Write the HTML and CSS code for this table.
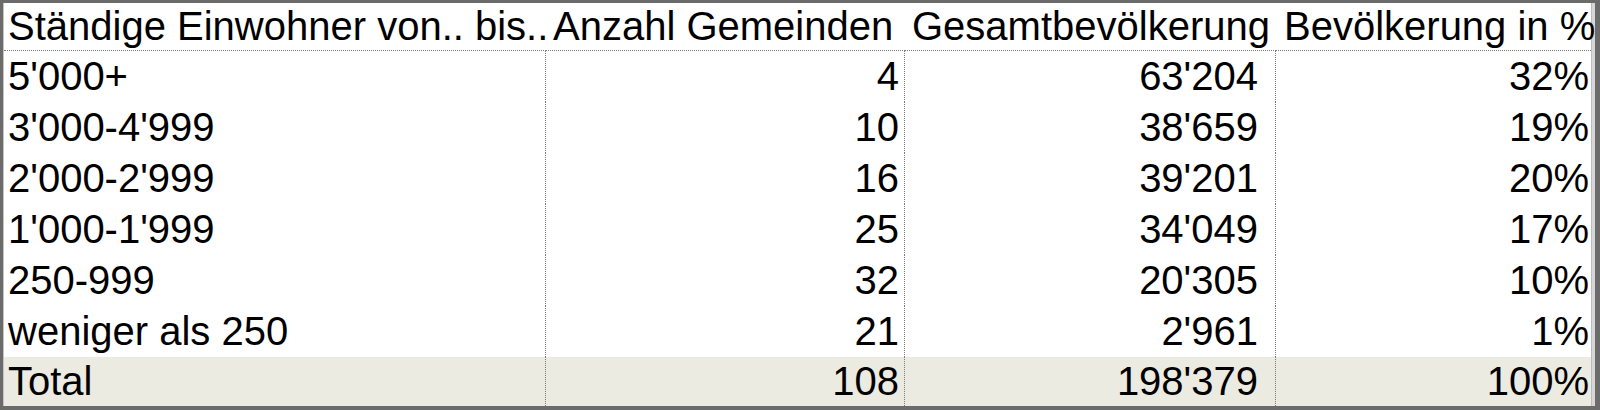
FILE: index.html
```html
<!DOCTYPE html>
<html lang="de">
<head>
<meta charset="utf-8">
<title>Ständige Einwohner</title>
<link rel="stylesheet" href="styles.css">
</head>
<body>
<div class="frame">
  <div class="inner">
    <div class="table">
      <div class="cell head first">Ständige Einwohner von.. bis..</div>
      <div class="cell head">Anzahl Gemeinden</div>
      <div class="cell head">Gesamtbevölkerung</div>
      <div class="cell head last">Bevölkerung in %</div>

      <div class="cell lbl">5'000+</div><div class="cell num c2">4</div><div class="cell num c3">63'204</div><div class="cell num c4">32%</div>
      <div class="cell lbl">3'000-4'999</div><div class="cell num c2">10</div><div class="cell num c3">38'659</div><div class="cell num c4">19%</div>
      <div class="cell lbl">2'000-2'999</div><div class="cell num c2">16</div><div class="cell num c3">39'201</div><div class="cell num c4">20%</div>
      <div class="cell lbl">1'000-1'999</div><div class="cell num c2">25</div><div class="cell num c3">34'049</div><div class="cell num c4">17%</div>
      <div class="cell lbl">250-999</div><div class="cell num c2">32</div><div class="cell num c3">20'305</div><div class="cell num c4">10%</div>
      <div class="cell lbl">weniger als 250</div><div class="cell num c2">21</div><div class="cell num c3">2'961</div><div class="cell num c4">1%</div>

      <div class="cell lbl total">Total</div><div class="cell num c2 total">108</div><div class="cell num c3 total">198'379</div><div class="cell num c4 total">100%</div>
    </div>
  </div>
</div>
</body>
</html>
```
FILE: styles.css
```css
html, body {
  margin: 0;
  padding: 0;
  background: #6b6b6b;
}
.frame {
  width: 1600px;
  height: 410px;
  box-sizing: border-box;
  border-style: solid;
  border-color: #6b6b6b;
  border-width: 3px 5px 4px 3px;
  background: #d6d6d6;
}
.inner {
  height: 100%;
  box-sizing: border-box;
  border-left: 1px solid #c4c4c4;
  border-right: 1px solid #bcbcbc;
  margin-right: 3px;
  background: #ffffff;
}
.table {
  display: grid;
  grid-template-columns: 542px 359px 371px 1fr;
  grid-template-rows: 48px repeat(6, 51px) 1fr;
  height: 100%;
  font-family: "Liberation Sans", Arial, sans-serif;
  font-size: 40px;
  color: #000;
}
.cell {
  display: flex;
  align-items: center;
  white-space: nowrap;
  box-sizing: border-box;
  min-width: 0;
}
.head {
  border-bottom: 1px dotted #7a7a7a;
  padding-left: 7px;
  padding-bottom: 1px;
  overflow: visible;
}
.head.first {
  padding-left: 4px;
}
.head.last {
  padding-left: 8px;
}
.lbl {
  padding-left: 4px;
  border-right: 1px dotted #7a7a7a;
}
.num {
  justify-content: flex-end;
}
.c2 {
  padding-right: 5px;
  border-right: 1px dotted #7a7a7a;
}
.c3 {
  padding-right: 17px;
  border-right: 1px dotted #7a7a7a;
}
.c4 {
  padding-right: 2px;
}
.total {
  background: #ecebe1;
}
```
